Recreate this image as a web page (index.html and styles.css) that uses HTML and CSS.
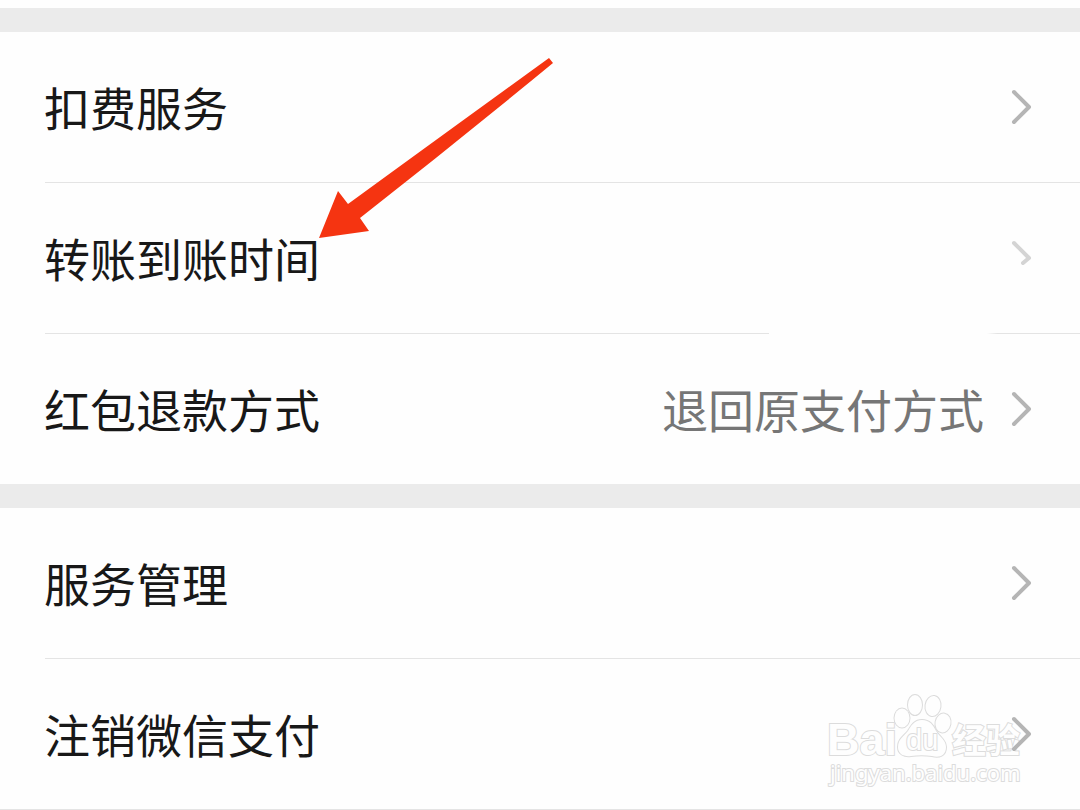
FILE: index.html
```html
<!DOCTYPE html>
<html lang="zh-CN">
<head>
<meta charset="utf-8">
<meta name="viewport" content="width=device-width, initial-scale=1">
<title>支付设置</title>
<link rel="stylesheet" href="styles.css">
</head>
<body>
<main class="settings">
  <ul class="group">
    <li class="item">
      <a class="row" href="#deduct"><span class="label">扣费服务</span>
        <svg class="chevron" viewBox="0 0 24 36" aria-hidden="true"><path d="M4 3 L19 18 L4 33"/></svg></a>
    </li>
    <li class="item item-broken">
      <a class="row" href="#arrival"><span class="label">转账到账时间</span>
        <svg class="chevron chevron-faint" viewBox="0 0 24 36" aria-hidden="true"><path d="M4 3 L19 18 L13 23"/></svg></a>
      <svg class="arrow" viewBox="0 0 236 182" aria-hidden="true"><path d="M1 181 L20 134 L30 147 Q133 72 231 1 L235 6 Q139 85 42 161 L51 174 Z"/></svg>
    </li>
    <li class="item">
      <a class="row" href="#refund"><span class="label">红包退款方式</span><span class="value">退回原支付方式</span>
        <svg class="chevron" viewBox="0 0 24 36" aria-hidden="true"><path d="M4 3 L19 18 L4 33"/></svg></a>
    </li>
  </ul>
  <ul class="group">
    <li class="item">
      <a class="row" href="#manage"><span class="label">服务管理</span>
        <svg class="chevron" viewBox="0 0 24 36" aria-hidden="true"><path d="M4 3 L19 18 L4 33"/></svg></a>
    </li>
    <li class="item item-end">
      <svg class="watermark" viewBox="0 0 210 110" role="img" aria-label="Baidu 经验">
        <g class="paw">
          <ellipse cx="82" cy="28" rx="7.500" ry="9.500"/>
          <ellipse cx="95" cy="15" rx="7" ry="10"/>
          <ellipse cx="113" cy="16" rx="7.500" ry="10" transform="rotate(8 113 16)"/>
          <ellipse cx="123" cy="33" rx="7.500" ry="9.500" transform="rotate(10 123 33)"/>
          <path d="M102 30 C94 30 91 36 88 41 C84 46 78 49 78 57 C78 64 84 67 91 66 C98 65 105 65 112 66 C119 68 126 66 126 57 C126 50 119 46 116 41 C113 35 110 30 102 30 Z"/>
        </g>
        <text class="mark-brand" x="7" y="65">Bai</text>
        <text class="mark-du" x="86" y="60">du</text>
        <text class="mark-cn" x="132" y="63">经验</text>
        <text class="mark-url" x="10" y="91">jingyan.baidu.com</text>
      </svg>
      <a class="row" href="#close"><span class="label">注销微信支付</span>
        <svg class="chevron" viewBox="0 0 24 36" aria-hidden="true"><path d="M4 3 L19 18 L4 33"/></svg></a>
    </li>
  </ul>
</main>
</body>
</html>
```
FILE: styles.css
```css
* { box-sizing: border-box; }

body {
  margin: 0;
  background: #fefefe;
  color: #181818;
  font-family: "Noto Sans CJK SC", sans-serif;
}

.settings { padding-top: 8px; overflow: hidden; }

.group {
  margin: 0;
  padding: 0;
  list-style: none;
  border-top: 24px solid #ebebeb;
}

.item { position: relative; }

.item:not(:last-child)::after {
  content: "";
  display: block;
  height: 1px;
  margin-left: 45px;
  background: #e4e4e4;
}

.item-broken:not(:last-child)::after {
  background: linear-gradient(to right, #e4e4e4 70%, transparent 70%, transparent 91%, #e4e4e4 92%);
}

.item-end { border-bottom: 1px solid #e4e4e4; }

.row {
  position: relative;
  display: flex;
  align-items: center;
  height: 150px;
  padding: 0 46px 0 44px;
  color: inherit;
  text-decoration: none;
  font-size: 46px;
  line-height: 68px;
}

.label,
.value { padding-bottom: 3px; }

.label { flex: 1; }

.value { color: #767676; }

.chevron {
  flex: none;
  width: 24px;
  height: 36px;
  margin-left: 26px;
  fill: none;
  stroke: #b5b5b5;
  stroke-width: 4;
  stroke-linecap: round;
  stroke-linejoin: round;
}

.chevron-faint { stroke: #d4d4d4; }

.arrow {
  position: absolute;
  left: 318px;
  top: -126px;
  width: 236px;
  height: 182px;
  fill: #f53411;
}

.watermark {
  position: absolute;
  right: 50px;
  bottom: 9px;
  width: 210px;
  height: 110px;
  overflow: visible;
  fill: #fefefe;
  stroke: #dcdcdc;
  stroke-width: 2;
  paint-order: stroke;
}

.mark-brand { font: bold 45px "Liberation Sans", sans-serif; }
.mark-du { font: 29px "Liberation Sans", sans-serif; }
.mark-cn { font: bold 34px "Noto Sans CJK SC", sans-serif; }
.mark-url { font: 22px "Noto Sans", sans-serif; }
```
